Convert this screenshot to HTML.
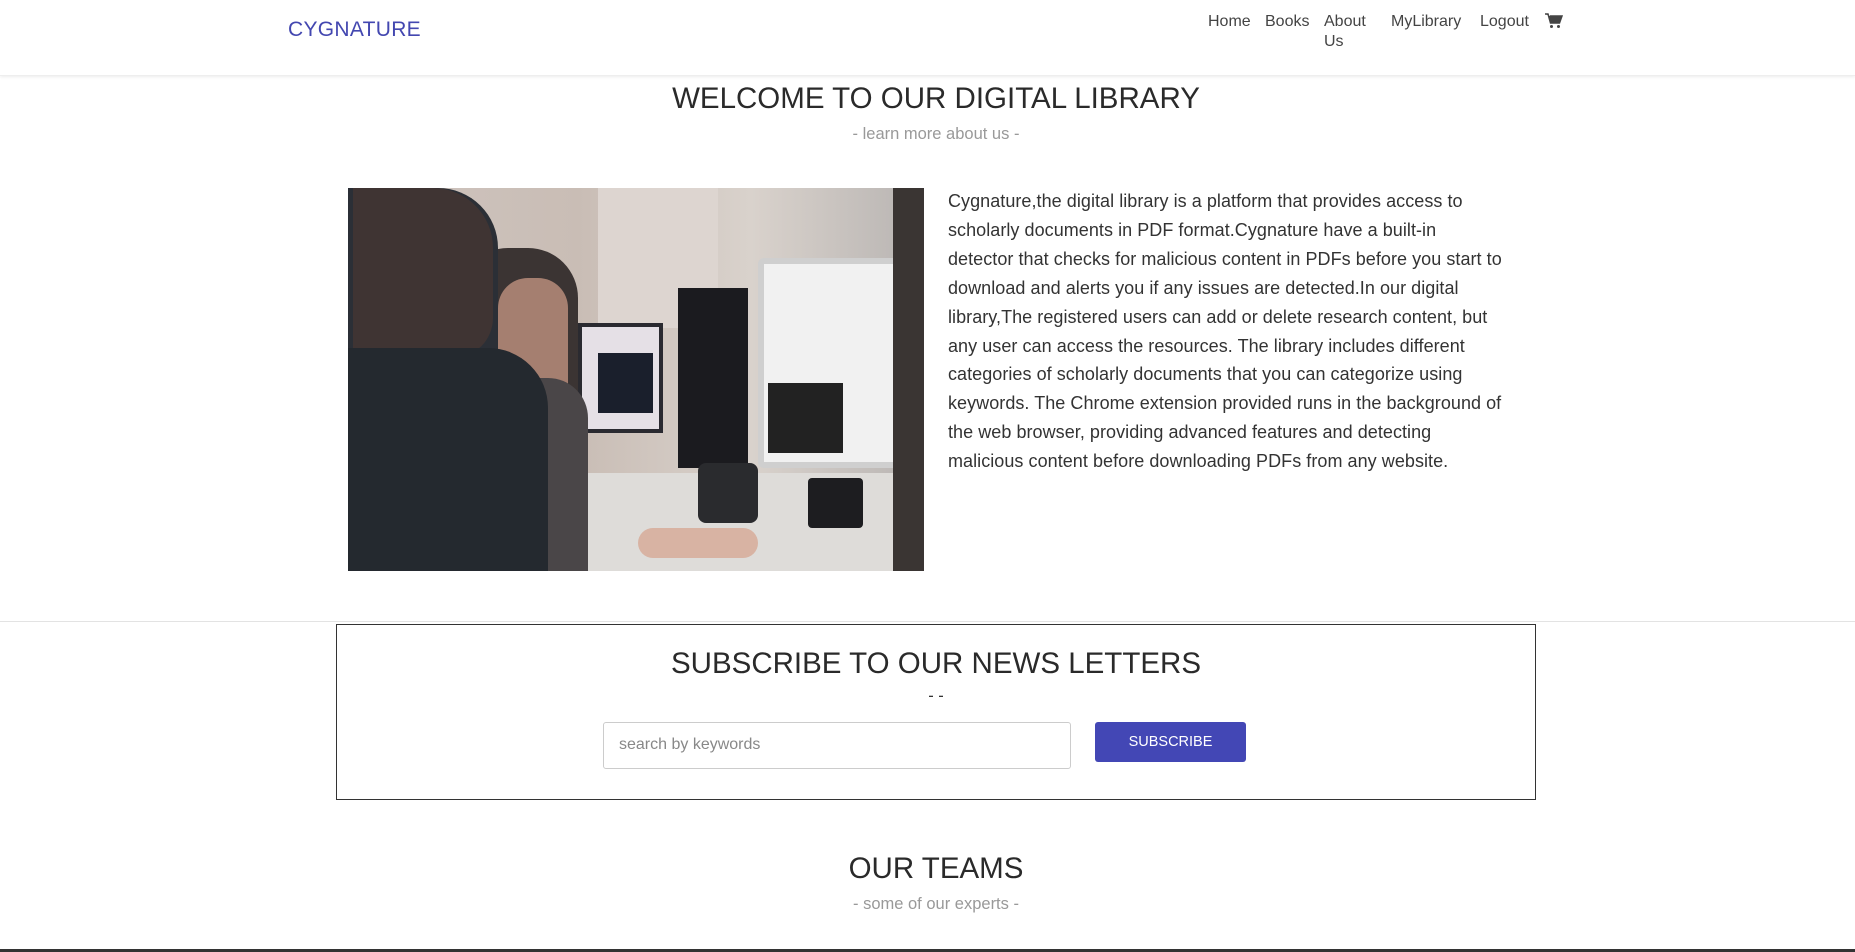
<!DOCTYPE html>
<html><head><meta charset="utf-8"><style>
*{margin:0;padding:0;box-sizing:border-box}
body{width:1855px;height:952px;position:relative;background:#fff;font-family:"Liberation Sans",sans-serif;overflow:hidden;color:#333}
.a{position:absolute;white-space:nowrap}
.nav{position:absolute;left:0;top:0;width:1855px;height:76px;background:#fff;box-shadow:0 1px 3px rgba(0,0,0,.08);border-bottom:1px solid #eee}
.ni{position:absolute;top:12px;font-size:16px;color:#444;line-height:20px}
h2{position:absolute;left:336px;width:1200px;text-align:center;font-weight:normal;font-size:29.5px;color:#2a2a2a}
.sub{position:absolute;left:336px;width:1200px;text-align:center;font-size:16.5px;color:#999}
.p{position:absolute;left:948px;top:187px;font-size:18px;line-height:28.9px;color:#333;white-space:nowrap;letter-spacing:.05px}
</style></head><body>
<div class="nav">
<div class="a" style="left:288px;top:18px;font-size:21px;color:#4347b0;letter-spacing:.3px">CYGNATURE</div>
<div class="ni" style="left:1208px">Home</div>
<div class="ni" style="left:1265px">Books</div>
<div class="ni" style="left:1324px">About<br>Us</div>
<div class="ni" style="left:1391px">MyLibrary</div>
<div class="ni" style="left:1480px">Logout</div>
<svg class="a" style="left:1545px;top:13px" width="18" height="16" viewBox="0 0 18 16"><path d="M0 1h3l2.5 9h9l2.5-7H5" fill="#444" stroke="#444" stroke-width="1.5"/><circle cx="6.5" cy="13.5" r="1.5" fill="#444"/><circle cx="13.5" cy="13.5" r="1.5" fill="#444"/></svg>
</div>
<h2 style="top:82px">WELCOME TO OUR DIGITAL LIBRARY</h2>
<div class="sub" style="top:125px">- learn more about us -</div>
<div class="a" style="left:348px;top:188px;width:576px;height:383px;overflow:hidden;background:#d8cdc8">
<div class="a" style="left:0;top:0;width:576px;height:383px;background:linear-gradient(90deg,#cfc5c0 0%,#c9bdb5 40%,#d9d2cc 70%,#b8b4b2 100%)"></div>
<div class="a" style="left:250px;top:0;width:120px;height:140px;background:#ddd5d0"></div>
<div class="a" style="left:410px;top:70px;width:150px;height:210px;background:#f1f1f1;border:6px solid #cfcfcf;border-radius:6px"></div>
<div class="a" style="left:420px;top:195px;width:75px;height:70px;background:#222"></div>
<div class="a" style="left:330px;top:100px;width:70px;height:180px;background:#1b1b1f"></div>
<div class="a" style="left:230px;top:135px;width:85px;height:110px;background:#e5e0e6;border:4px solid #2a2a30"></div>
<div class="a" style="left:250px;top:165px;width:55px;height:60px;background:#1a1f2c"></div>
<div class="a" style="left:200px;top:285px;width:376px;height:98px;background:#dedcd9"></div>
<div class="a" style="left:350px;top:275px;width:60px;height:60px;background:#2a2b2e;border-radius:8px"></div>
<div class="a" style="left:460px;top:290px;width:55px;height:50px;background:#1d1d20;border-radius:4px"></div>
<div class="a" style="left:545px;top:0;width:31px;height:383px;background:#3a3533"></div>
<div class="a" style="left:110px;top:60px;width:120px;height:240px;background:#3b3433;border-radius:50px 50px 10px 10px"></div>
<div class="a" style="left:150px;top:90px;width:70px;height:150px;background:#a57f70;border-radius:30px"></div>
<div class="a" style="left:120px;top:190px;width:120px;height:193px;background:#4a4648;border-radius:40px 40px 0 0"></div>
<div class="a" style="left:0;top:0;width:150px;height:383px;background:#2b2f36;border-radius:0 60px 0 0"></div>
<div class="a" style="left:5px;top:0;width:140px;height:170px;background:#3f3433;border-radius:0 60px 40px 0"></div>
<div class="a" style="left:0;top:160px;width:200px;height:223px;background:#24292f;border-radius:0 60px 0 0"></div>
<div class="a" style="left:290px;top:340px;width:120px;height:30px;background:#d8b3a3;border-radius:15px"></div>
</div>
<div class="p">Cygnature,the digital library is a platform that provides access to<br>scholarly documents in PDF format.Cygnature have a built-in<br>detector that checks for malicious content in PDFs before you start to<br>download and alerts you if any issues are detected.In our digital<br>library,The registered users can add or delete research content, but<br>any user can access the resources. The library includes different<br>categories of scholarly documents that you can categorize using<br>keywords. The Chrome extension provided runs in the background of<br>the web browser, providing advanced features and detecting<br>malicious content before downloading PDFs from any website.</div>
<div class="a" style="left:0;top:621px;width:1855px;height:1px;background:#e3e3e3"></div>
<div class="a" style="left:336px;top:624px;width:1200px;height:176px;border:1px solid #333"></div>
<h2 style="top:647px">SUBSCRIBE TO OUR NEWS LETTERS</h2>
<div class="sub" style="top:687px;color:#333">- -</div>
<div class="a" style="left:603px;top:722px;width:468px;height:47px;border:1px solid #ccc;border-radius:3px;font-size:16px;color:#888;padding:13px 15px">search by keywords</div>
<div class="a" style="left:1095px;top:722px;width:151px;height:40px;background:#4347b5;border-radius:3px;color:#fff;font-size:14.5px;text-align:center;line-height:40px">SUBSCRIBE</div>
<h2 style="top:852px">OUR TEAMS</h2>
<div class="sub" style="top:895px">- some of our experts -</div>
<div class="a" style="left:0;top:949px;width:1855px;height:3px;background:#333"></div>
</body></html>
